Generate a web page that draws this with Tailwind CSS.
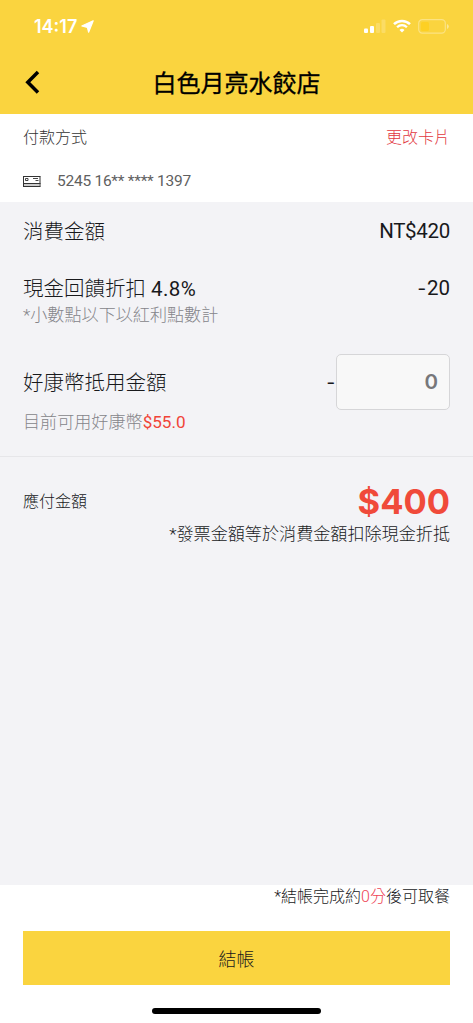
<!DOCTYPE html>
<html lang="zh-Hant">
<head>
<meta charset="utf-8">
<title>結帳</title>
<script src="https://cdn.jsdelivr.net/npm/@tailwindcss/browser@4"></script>
</head>
<body class="bg-white">
<div class="flex flex-col w-[473px] h-[1023px] overflow-hidden bg-white text-[#18191c] font-['Roboto','Noto_Sans_CJK_TC',sans-serif] whitespace-nowrap">
  <header class="h-[114px] shrink-0 bg-[#fad43f] flex flex-col">
    <div class="h-[52px] flex items-center justify-between pl-[34px] pr-[24px]">
      <div class="flex items-center gap-[4px] text-white">
        <span class="font-['Inter',sans-serif] font-semibold text-[18px] leading-[20px] pt-px">14:17</span>
        <svg class="w-[13px] h-[13px]" viewBox="0 0 13 13" fill="#fff"><path d="M12.2 .8 7.6 12.2 6.4 7.4 .8 6z" stroke="#fff" stroke-width="1.2" stroke-linejoin="round"/></svg>
      </div>
      <div class="flex items-center gap-[7px]">
        <svg class="w-[22px] h-[14px]" viewBox="0 0 22 14" fill="#fff"><rect x="0" y="9.5" width="4" height="4.5" rx="1"/><rect x="6" y="7" width="4" height="7" rx="1"/><rect x="12" y="4" width="4" height="10" rx="1" opacity=".2"/><rect x="17.5" y="0.5" width="4" height="13.5" rx="1" opacity=".2"/></svg>
        <svg class="w-[18px] h-[14px]" viewBox="0 0 18 14" fill="none" stroke="#fff"><path d="M1 5.2A11.4 11.4 0 0 1 17 5.2" stroke-width="2.5"/><path d="M4.1 8.2A7 7 0 0 1 13.9 8.2" stroke-width="2.3"/><path d="M9 13.4 6.5 10.9A3.6 3.6 0 0 1 11.5 10.9z" fill="#fff" stroke="none"/></svg>
        <svg class="w-[31px] h-[15px]" viewBox="0 0 31 15"><rect x=".7" y=".7" width="26.6" height="13.4" rx="3.6" fill="none" stroke="#fff" stroke-opacity=".35" stroke-width="1.2"/><rect x="3" y="3" width="8" height="9" rx="1.5" fill="#fdd023"/><path d="M29 5v5q1.8-.8 1.8-2.5T29 5z" fill="#fff" fill-opacity=".45"/></svg>
      </div>
    </div>
    <div class="h-[60px] grid grid-cols-[60px_1fr_60px] items-center">
      <svg class="ml-[25px] w-[15px] h-[24px]" viewBox="0 0 15 24" fill="none" stroke="#000" stroke-width="3.5"><path d="M13 2 2.8 12.2 13 22.4"/></svg>
      <h1 class="text-center text-[24px] leading-[36px] pt-[3px] font-normal [-webkit-text-stroke:0.3px_#000] text-black">白色月亮水餃店</h1>
    </div>
  </header>

  <section class="h-[88px] shrink-0 px-[23px] flex flex-col pt-[12px]">
    <div class="flex justify-between text-[16px] leading-[24px] font-light">
      <span class="text-[#333]">付款方式</span>
      <span class="text-[#e2383f]">更改卡片</span>
    </div>
    <div class="flex items-center mt-[19px] h-[24px] text-[#606060]">
      <svg class="w-[18px] h-[13px]" viewBox="0 0 18 13" fill="none" stroke="#333"><path d="M.5 11.5V1.5h16.5v10M0 1.5h17.5M0 8.5h17.5M0 11.5h17.5"/><path d="M1 10h16" stroke="#999"/><path d="M2.5 3.5h2.5v2h-2.5zM10 3.5h5M12.5 5.5h3" stroke-width=".9"/></svg>
      <span class="ml-[16px] text-[15.5px] leading-[24px] tracking-[-0.25px]">5245 16** **** 1397</span>
    </div>
  </section>

  <main class="h-[683px] shrink-0 bg-[#f3f3f6] flex flex-col">
    <div class="h-[255px] px-[23px] border-b border-[#e6e6e9] flex flex-col">
      <div class="mt-[14px] flex justify-between text-[20.5px] leading-[30px]">
        <span class="font-light pt-px">消費金額</span><span class="tracking-[-0.3px]">NT$420</span>
      </div>
      <div class="mt-[26px] h-[30px] flex justify-between text-[20.5px] leading-[30px]">
        <span class="font-light pt-px">現金回饋折扣 <span class="font-normal tracking-[0.4px]">4.8%</span></span><span class="flex"><span class="inline-block scale-x-125 mr-[2px]">-</span>20</span>
      </div>
      <p class="text-[17.1px] leading-[24px] font-light text-[#85858a]">*小數點以下以紅利點數計</p>
      <div class="mt-[27px] h-[56px] flex items-center text-[20.5px] leading-[30px]">
        <span class="font-light pt-px">好康幣抵用金額</span>
        <span class="ml-auto mr-[2px] scale-x-125">-</span>
        <div class="w-[114px] h-[56px] rounded-[5px] border border-[#d6d6d8] bg-[#f8f8f8] flex items-center justify-end pr-[11px]"><span class="font-['Inter',sans-serif] font-semibold text-[20.5px] text-[#77777a]">0</span></div>
      </div>
      <p class="text-[17.1px] leading-[24px] font-light text-[#85858a]">目前可用好康幣<span class="font-normal text-[#f04438]">$55.0</span></p>
    </div>
    <div class="px-[23px] pt-[24px] flex items-center justify-between">
      <span class="text-[16px] leading-[40px] font-light pt-px">應付金額</span>
      <span class="font-['Inter',sans-serif] font-bold text-[34.5px] leading-[40px] text-[#f04a3a]">$400</span>
    </div>
    <p class="px-[23px] text-right text-[17.1px] leading-[24px] font-light">*發票金額等於消費金額扣除現金折抵</p>
  </main>

  <footer class="flex flex-col px-[23px] h-[138px] shrink-0">
    <p class="text-right text-[16px] leading-[24px] font-light">*結帳完成約<span class="text-[#ee4455]">0分</span>後可取餐</p>
    <button class="mt-[22px] h-[54px] shrink-0 bg-[#fad43f] text-[18px] font-light text-[#18191c] pt-[2px]">結帳</button>
    <div class="mt-[23px] mx-auto w-[169px] h-[6px] shrink-0 rounded-full bg-black"></div>
  </footer>
</div>
</body>
</html>
